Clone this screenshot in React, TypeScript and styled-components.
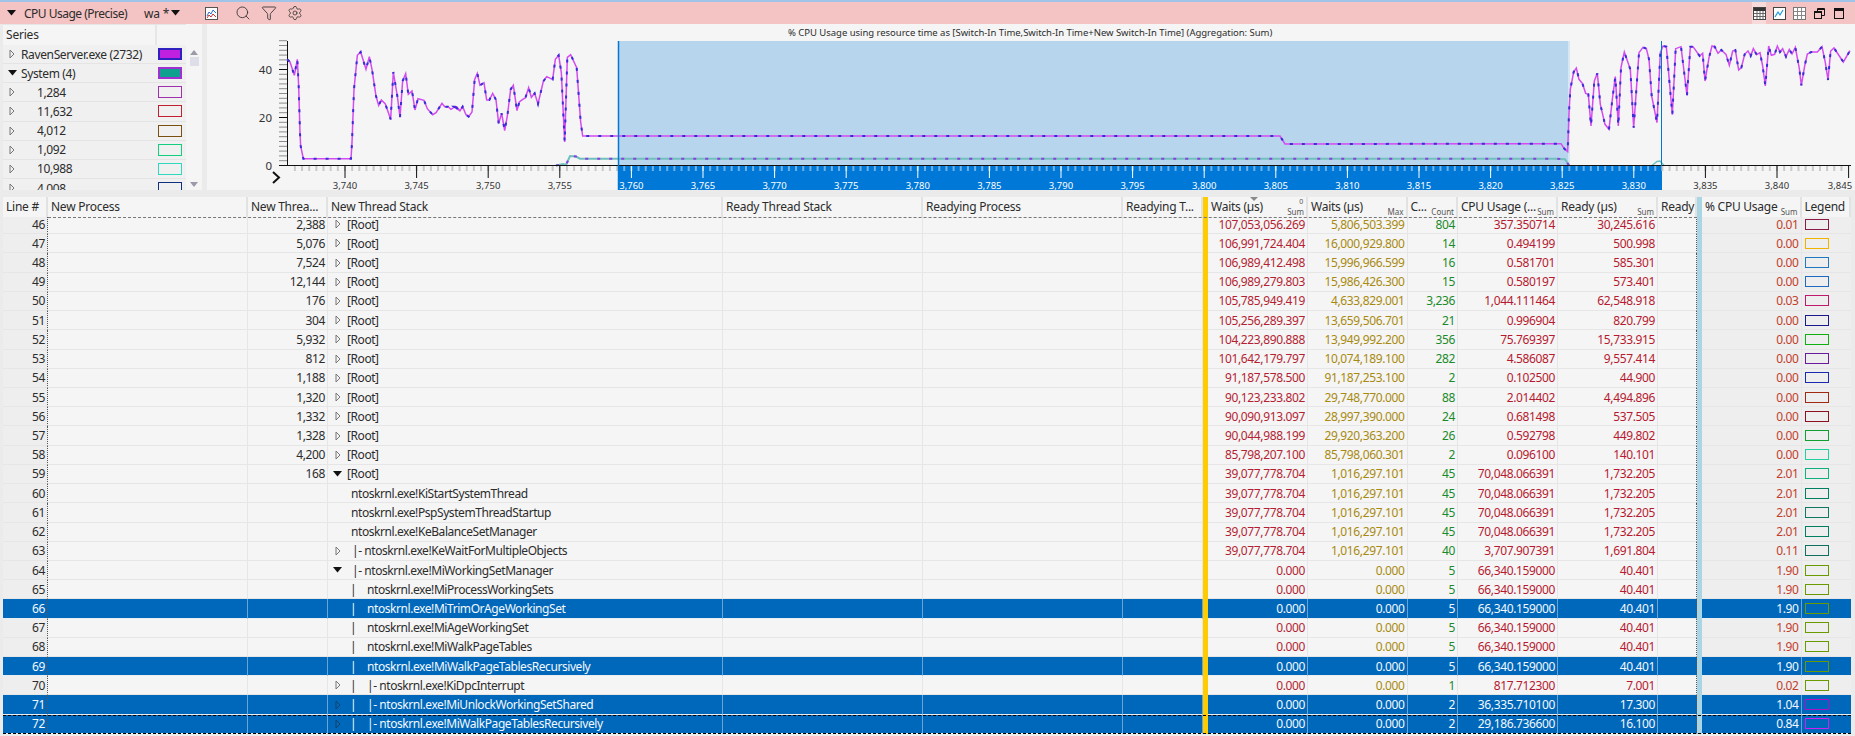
import { Search, Funnel, Settings } from "lucide-react";
import styled, { createGlobalStyle } from "styled-components";

const GlobalStyle = createGlobalStyle`
  html, body {
    margin: 0;
    padding: 0;
    background: #ebebeb;
    overflow: hidden;
  }
  body {
    font-family: "Noto Sans", "Open Sans", sans-serif;
    font-size: 12px;
    color: #2c2c2c;
  }
`;

const Page = styled.div`
  width: 1855px;
  height: 736px;
  overflow: hidden;
  border-top: 2px solid #9fc4e8;
  box-sizing: border-box;
`;

const Toolbar = styled.div`
  display: flex;
  align-items: center;
  height: 22px;
  background: #f4c3c3;
  padding-left: 7px;
`;

const TitleText = styled.span`
  margin-left: 8px;
  width: 120px;
  letter-spacing: -0.5px;
`;

const ViewName = styled.span`
  width: 27px;
  letter-spacing: -0.2px;
`;

const ToolIcon = styled.span<{ $gap?: number }>`
  display: flex;
  align-items: center;
  margin-left: ${(p) => p.$gap ?? 0}px;
  color: #333;
`;

const WindowIcons = styled.div`
  display: flex;
  align-items: center;
  gap: 6px;
  margin-left: auto;
  margin-right: -11px;
  height: 100%;
`;

const WindowIcon = styled.span<{ $active?: boolean }>`
  display: flex;
  align-items: center;
  justify-content: center;
  width: 14px;
  height: 100%;
  background: ${(p) => (p.$active ? "#f7dada" : "transparent")};
`;

const GraphArea = styled.div`
  display: flex;
  height: 166px;
`;

const SeriesPanel = styled.div`
  width: 183px;
  margin-left: 3px;
  background: #f0f0f0;
  overflow: hidden;
`;

const SeriesHeader = styled.div`
  display: grid;
  grid-template-columns: 152px 29px;
  gap: 2px;
  height: 21px;
  padding-top: 1px;
  box-sizing: border-box;
  background: #e6e6e6;
`;

const SeriesHeaderCell = styled.div`
  background: #f5f5f5;
  padding-left: 3px;
  line-height: 19px;
  letter-spacing: -0.2px;
`;

const SeriesRow = styled.div`
  display: flex;
  align-items: center;
  height: 19.15px;
  border-bottom: 1px solid #e4e4e4;
  box-sizing: border-box;
  position: relative;
  letter-spacing: -0.37px;
`;

const SeriesName = styled.span<{ $indent: number }>`
  margin-left: ${(p) => p.$indent}px;
  width: 137px;
  white-space: nowrap;
  flex-shrink: 0;
`;

const SeriesExpander = styled.span`
  display: flex;
  justify-content: center;
  width: 12px;
  margin-left: 3px;
`;

const SeriesSwatch = styled.span<{ $border: string; $fill?: string; $thick?: boolean }>`
  position: absolute;
  left: 155px;
  width: 24px;
  height: 12px;
  box-sizing: border-box;
  border: ${(p) => (p.$thick ? 2 : 1)}px solid ${(p) => p.$border};
  background: ${(p) => p.$fill ?? "transparent"};
`;

const Scroller = styled.div`
  width: 16px;
  background: #f5f5f5;
  display: flex;
  flex-direction: column;
  align-items: center;
  padding: 26px 0 3px;
  box-sizing: border-box;
`;

const ScrollThumb = styled.div`
  width: 9px;
  height: 9px;
  margin-top: 2px;
  background: #dedee8;
`;

const ScrollArrow = styled.div<{ $down?: boolean }>`
  width: 0;
  height: 0;
  border-left: 4.5px solid transparent;
  border-right: 4.5px solid transparent;
  ${(p) => (p.$down ? "border-top: 5px solid #9a9aa8; margin-top: auto;" : "border-bottom: 5px solid #9a9aa8;")}
`;

const ChartPanel = styled.div`
  margin-left: 5px;
  flex: 1;
  background: #f5f5f5;
  display: flex;
  flex-direction: column;
`;

const ChartTitle = styled.div`
  height: 17px;
  line-height: 17px;
  font-size: 9.5px;
  padding-left: 581px;
  white-space: nowrap;
  letter-spacing: -0.03px;
`;

const ChartSvg = styled.svg`
  display: block;
  width: 1648px;
  height: 149px;
  overflow: visible;
`;

const Table = styled.div`
  margin-top: 7px;
  padding-left: 3px;
`;

const gridColumns = "45px 200px 80px 395px 200px 200px 80px 5px 100px 99.5px 50.5px 100px 100px 39px 5px 99.5px 49.5px";

const HeaderRow = styled.div`
  display: grid;
  grid-template-columns: ${gridColumns};
  width: 1848px;
  height: 20px;
  position: relative;
  z-index: 1;
`;

const HeaderCell = styled.div`
  position: relative;
  background: #f5f5f5;
  border-right: 2px solid #e2e2e2;
  box-sizing: border-box;
  padding-left: 3px;
  line-height: 19px;
  white-space: nowrap;
  overflow: hidden;
  letter-spacing: -0.25px;
`;

const SubLabel = styled.span`
  position: absolute;
  right: 2px;
  bottom: 0;
  font-size: 8px;
  line-height: 11px;
  color: #555;
  letter-spacing: 0;
`;

const SortMark = styled.span`
  position: absolute;
  left: 42px;
  top: 0;
  width: 0;
  height: 0;
  border-left: 4px solid transparent;
  border-right: 4px solid transparent;
  border-top: 4px solid #8a8a8a;
`;

const SortIndex = styled.span`
  position: absolute;
  right: 3px;
  top: 0;
  font-size: 7px;
  line-height: 9px;
  color: #555;
`;

const Bar = styled.div<{ $color: string }>`
  background: ${(p) => p.$color};
`;

const Body = styled.div`
  position: relative;
  width: 1848px;
  height: 519px;
  overflow: hidden;
  &::before {
    content: "";
    position: absolute;
    z-index: 2;
    top: 0;
    left: 45px;
    width: 1649px;
    border-top: 1px dashed #777;
  }
`;

const Row = styled.div<{ $selected?: boolean; $focused?: boolean }>`
  position: relative;
  display: grid;
  grid-template-columns: ${gridColumns};
  height: 19.23px;
  background: ${(p) => (p.$selected ? "#0068bb" : "#f5f5f5")};
  &:first-child {
    margin-top: -2px;
  }
  ${(p) =>
    p.$focused &&
    `&::after {
      content: "";
      position: absolute;
      inset: 0;
      border-top: 1px dashed #000;
      border-bottom: 1px dashed #000;
      pointer-events: none;
    }`}
`;

const Cell = styled.div<{
  $selected?: boolean;
  $color?: string;
  $shade?: boolean;
  $dotted?: boolean;
}>`
  box-sizing: border-box;
  display: flex;
  align-items: center;
  justify-content: flex-end;
  padding-right: 2px;
  white-space: nowrap;
  letter-spacing: -0.37px;
  color: ${(p) => (p.$selected ? "#f4f8fc" : p.$color ?? "#2c2c2c")};
  background: ${(p) => (p.$selected ? "#0068bb" : p.$shade ? "#eeeeee" : "#f5f5f5")};
  border-bottom: 1px solid ${(p) => (p.$selected ? "#e9eef2" : "#e6e6e6")};
  border-right: 1px ${(p) => (p.$dotted ? "dotted #555" : "solid")}
    ${(p) => (p.$dotted ? "" : p.$selected ? "#6aa4d4" : "#e6e6e6")};
`;

const StackCell = styled(Cell)`
  justify-content: flex-start;
  padding-left: 5px;
`;

const Expander = styled.span`
  display: flex;
  align-items: center;
  justify-content: center;
  width: 9px;
  flex-shrink: 0;
`;

const StackLabel = styled.span<{ $indent: number }>`
  margin-left: ${(p) => p.$indent}px;
  letter-spacing: -0.43px;
`;

const TreeBar = styled.span<{ $indent: number }>`
  margin-left: ${(p) => p.$indent}px;
  width: 17px;
  flex-shrink: 0;
`;

const LegendSwatch = styled.span<{ $color: string }>`
  width: 24px;
  height: 11px;
  box-sizing: border-box;
  border: 1.5px solid ${(p) => p.$color};
`;

const LegendCell = styled(Cell)`
  justify-content: flex-start;
  padding-left: 3px;
  border-right: none;
`;

const ClosedTriangle = ({ color = "#777" }: { color?: string }) => (
  <svg width="6" height="10" viewBox="0 0 6 10">
    <path d="M1 1 L5 5 L1 9 Z" fill="none" stroke={color} strokeWidth="1" />
  </svg>
);

const OpenTriangle = () => (
  <svg width="9" height="6" viewBox="0 0 9 6">
    <path d="M0 0 H9 L4.5 5.5 Z" fill="#111" />
  </svg>
);

const ChartGlyph = () => (
  <svg width="13" height="13" viewBox="0 0 13 13">
    <rect x="0.5" y="0.5" width="12" height="12" fill="#fff" stroke="#555" />
    <path d="M2 9 L4 5 L6 7 L8 3 L11 6" fill="none" stroke="#2b6fd0" />
    <path d="M2 11 L4 8 L6 10 L8 7 L11 10" fill="none" stroke="#d03030" />
  </svg>
);

const TableGlyph = () => (
  <svg width="13" height="13" viewBox="0 0 13 13">
    <rect x="0.5" y="0.5" width="12" height="12" fill="#fff" stroke="#444" />
    <rect x="1" y="1" width="11" height="3" fill="#333" />
    <path d="M1 6.5 H12 M1 9.5 H12 M4 4 V12 M7 4 V12 M10 4 V12" stroke="#666" />
  </svg>
);

const LineGlyph = () => (
  <svg width="13" height="13" viewBox="0 0 13 13">
    <rect x="0.5" y="0.5" width="12" height="12" fill="#fff" stroke="#444" />
    <path d="M2 10 L5 5 L7 8 L10 3" fill="none" stroke="#1a9ae0" strokeWidth="1.2" />
  </svg>
);

const GridGlyph = () => (
  <svg width="13" height="13" viewBox="0 0 13 13">
    <rect x="0.5" y="0.5" width="12" height="12" fill="#fff" stroke="#777" />
    <path d="M0.5 4.5 H12.5 M0.5 8.5 H12.5 M4.5 0.5 V12.5 M8.5 0.5 V12.5" stroke="#888" />
  </svg>
);

const RestoreGlyph = () => (
  <svg width="11" height="11" viewBox="0 0 11 11">
    <path d="M3.5 3 V0.5 H10.5 V7.5 H8" fill="none" stroke="#111" />
    <rect x="0.5" y="3.5" width="7" height="7" fill="none" stroke="#111" />
    <path d="M1 4.5 H7 M4 1.5 H10" stroke="#111" />
  </svg>
);

const MaximizeGlyph = () => (
  <svg width="10" height="11" viewBox="0 0 10 11">
    <rect x="0.5" y="0.5" width="9" height="10" fill="none" stroke="#111" />
    <path d="M0.5 2 H9.5" stroke="#111" strokeWidth="2" />
  </svg>
);

const CloseGlyph = () => (
  <svg width="10" height="10" viewBox="0 0 10 10">
    <path d="M1 1 L9 9 M9 1 L1 9" stroke="#111" />
  </svg>
);

type Pair = [number, number];

// traced from crops that start at y 36, scale 3
const trace = (left: number, points: Pair[]): Pair[] =>
  points.map(([x, y]) => [left + x / 3, 36 + y / 3]);

const cpuLine: Pair[] = [
  ...trace(280, [
    [22, 70], [30, 78], [43, 118], [52, 70], [56, 150], [60, 290], [62, 330], [70, 368], [213, 368], [216, 320],
    [222, 160], [232, 58], [242, 48], [258, 100], [268, 62], [276, 100], [288, 180], [296, 208], [304, 192],
    [316, 204], [332, 250], [340, 108], [352, 180], [360, 244], [368, 135], [377, 113], [385, 175], [396, 165],
    [405, 222], [414, 188], [432, 193], [442, 218], [458, 236], [468, 230], [486, 202], [494, 212], [504, 212],
    [513, 220], [525, 212], [540, 225],
  ]),
  ...trace(450, [
    [12, 212], [20, 212], [30, 224], [38, 212], [48, 236], [56, 242], [66, 228], [74, 130], [82, 112], [90, 148],
    [102, 140], [110, 192], [118, 192], [128, 172], [138, 192], [146, 262], [155, 232], [164, 284], [172, 240],
    [182, 160], [190, 148], [201, 224], [208, 198], [218, 190], [226, 186], [236, 155], [244, 184], [254, 172],
    [264, 204], [280, 136], [290, 122], [308, 130], [316, 70], [326, 58], [334, 110], [344, 318], [352, 64],
    [362, 56], [380, 95], [392, 258], [398, 300],
  ]),
  [1083, 136], [1280, 136], [1285, 144],
  ...trace(1555, [
    [0, 323], [18, 323], [28, 338], [38, 347], [42, 230], [46, 160], [56, 108], [64, 96], [72, 130], [82, 142],
    [92, 172], [100, 175], [108, 270], [118, 135], [127, 112], [136, 205], [150, 265], [162, 280], [172, 190],
    [181, 122], [190, 270], [198, 95], [208, 48], [226, 100], [236, 275], [252, 50], [264, 34], [274, 38],
    [282, 70], [290, 180], [306, 260], [316, 50], [324, 30], [334, 32], [352, 236], [362, 38], [378, 32],
    [396, 178], [406, 32], [414, 32], [434, 60],
  ]),
  ...trace(1700, [
    [8, 52], [15, 135], [27, 65], [36, 30], [44, 32], [54, 52], [64, 42], [78, 55], [88, 88], [98, 45], [106, 42],
    [116, 102], [124, 95], [134, 55], [144, 45], [152, 60], [160, 38], [170, 56], [180, 50], [188, 90], [196, 150],
    [206, 30], [214, 58], [224, 55], [232, 30], [240, 48], [248, 38], [258, 62], [268, 40], [276, 54], [286, 34],
    [298, 98], [304, 148], [314, 90], [322, 54], [334, 48], [352, 48], [366, 32], [376, 80], [384, 132], [392, 45],
    [402, 36], [430, 78], [450, 44],
  ]),
];

const systemLine: Pair[] = [
  [556, 165.5], [563, 164], [566, 165], [570, 156], [576, 156.5], [580, 158.7], [1555, 158.7], [1565, 159.3],
  [1569, 165.5],
];

const systemBump: Pair[] = [[1652, 165.5], [1657, 161.5], [1660, 161], [1664, 165.5]];

const toPoints = (points: Pair[]) => points.map((p) => p.join(",")).join(" ");

const tickX = (t: number) => 345 + (t - 3740) * 14.32;

const yMinor = Array.from({ length: 27 }, (_, i) => i * 2);
const xMinor = Array.from({ length: 218 }, (_, i) => 3736 + i * 0.5).filter((t) => tickX(t) > 288 && tickX(t) < 1852);
const xMajor = Array.from({ length: 22 }, (_, i) => 3740 + i * 5);

const Chart = () => (
  <ChartSvg viewBox="207 41 1648 149" fontFamily="Noto Sans, sans-serif">
    <rect x="618" y="41" width="950" height="124" fill="#b8d5ee" />
    <rect x="1568" y="41" width="2" height="124" fill="#d6e6f3" />
    <rect x="618" y="166" width="1044" height="24" fill="#0078d7" />
    {yMinor.map((v) => {
      const y = 165.5 - v * 2.4;
      return <line key={v} x1="279" x2="287" y1={y} y2={y} stroke={v % 20 === 0 ? "#111" : "#8c8c8c"} />;
    })}
    <line x1="287.5" x2="287.5" y1="41" y2="166" stroke="#111" />
    {xMinor.map((t) => {
      const x = tickX(t);
      return (
        <line
          key={t}
          x1={x}
          x2={x}
          y1="166"
          y2="171"
          strokeWidth="2"
          stroke={x > 618 && x < 1662 ? "#6fb2e8" : "#c9c9c9"}
        />
      );
    })}
    {xMajor.map((t) => {
      const x = tickX(t);
      const inSelection = x > 618 && x < 1662;
      return (
        <g key={t}>
          <line x1={x} x2={x} y1="166" y2="178" stroke={inSelection ? "#fff" : "#111"} />
          <text
            x={Math.min(x, 1840)}
            y="188.5"
            fontSize="9.5"
            textAnchor="middle"
            fill={inSelection ? "#fff" : "#333"}
          >
            {(t / 1000).toFixed(3).replace(".", ",")}
          </text>
        </g>
      );
    })}
    <text x="272" y="73.5" fontSize="11.5" textAnchor="end" fill="#333">40</text>
    <text x="272" y="121.5" fontSize="11.5" textAnchor="end" fill="#333">20</text>
    <text x="272" y="170" fontSize="11.5" textAnchor="end" fill="#333">0</text>
    <path d="M273 172 L279 177.5 L273 183" fill="none" stroke="#111" strokeWidth="2" />
    <polyline points={toPoints(systemLine)} fill="none" stroke="#71c0bd" strokeWidth="2" />
    <polyline points={toPoints(systemBump)} fill="none" stroke="#71c0bd" strokeWidth="1.5" />
    <polyline points={toPoints(systemLine)} fill="none" stroke="#8a40e0" strokeWidth="2" strokeDasharray="3 9" />
    <polyline points={toPoints(cpuLine)} fill="none" stroke="#d24cf0" strokeWidth="1.5" />
    <polyline points={toPoints(cpuLine)} fill="none" stroke="#3a2cd8" strokeWidth="2" strokeDasharray="3 9" />
    <line x1="279" x2="1851" y1="165.5" y2="165.5" stroke="#111" />
    <line x1="618.5" x2="618.5" y1="41" y2="190" stroke="#0078d7" strokeWidth="1.5" />
    <line x1="1661.5" x2="1661.5" y1="41" y2="166" stroke="#0078c8" />
  </ChartSvg>
);

const seriesItems = [
  { name: "RavenServer.exe (2732)", indent: 3, border: "#3020c0", fill: "#c020e0", thick: true },
  { name: "System (4)", indent: 3, border: "#a030d0", fill: "#10a090", thick: true, open: true },
  { name: "1,284", indent: 19, border: "#a030b0" },
  { name: "11,632", indent: 19, border: "#c02030" },
  { name: "4,012", indent: 19, border: "#7a5010" },
  { name: "1,092", indent: 19, border: "#10d080" },
  { name: "10,988", indent: 19, border: "#30d8c0" },
  { name: "4,008", indent: 19, border: "#103080" },
];

const headers = [
  { label: "Line #" },
  { label: "New Process" },
  { label: "New Threa..." },
  { label: "New Thread Stack" },
  { label: "Ready Thread Stack" },
  { label: "Readying Process" },
  { label: "Readying T..." },
  { bar: "#ffcc00" },
  { label: "Waits (µs)", sub: "Sum", sorted: true },
  { label: "Waits (µs)", sub: "Max" },
  { label: "C...", sub: "Count" },
  { label: "CPU Usage (...", sub: "Sum" },
  { label: "Ready (µs)", sub: "Sum" },
  { label: "Ready" },
  { bar: "#a9d5e5" },
  { label: "% CPU Usage", sub: "Sum" },
  { label: "Legend" },
];

type Stack = { text: string; bars?: number; indent: number; toggle?: "open" | "closed"; dark?: boolean };

const root: Stack = { text: "[Root]", indent: 5, toggle: "closed" };

const sys = "ntoskrnl.exe!";
const idle = ["39,077,778.704", "1,016,297.101", "45", "70,048.066391", "1,732.205", "2.01"];
const working = ["0.000", "0.000", "5", "66,340.159000", "40.401", "1.90"];

const rows: {
  line: number;
  thread?: string;
  stack: Stack;
  values: string[];
  legend: string;
  selected?: boolean;
  focused?: boolean;
}[] = [
  { line: 46, thread: "2,388", stack: root, values: ["107,053,056.269", "5,806,503.399", "804", "357.350714", "30,245.616", "0.01"], legend: "#8b1a4a" },
  { line: 47, thread: "5,076", stack: root, values: ["106,991,724.404", "16,000,929.800", "14", "0.494199", "500.998", "0.00"], legend: "#f0b400" },
  { line: 48, thread: "7,524", stack: root, values: ["106,989,412.498", "15,996,966.599", "16", "0.581701", "585.301", "0.00"], legend: "#1f78c0" },
  { line: 49, thread: "12,144", stack: root, values: ["106,989,279.803", "15,986,426.300", "15", "0.580197", "573.401", "0.00"], legend: "#1f6ac0" },
  { line: 50, thread: "176", stack: root, values: ["105,785,949.419", "4,633,829.001", "3,236", "1,044.111464", "62,548.918", "0.03"], legend: "#c0186a" },
  { line: 51, thread: "304", stack: root, values: ["105,256,289.397", "13,659,506.701", "21", "0.996904", "820.799", "0.00"], legend: "#1a1a8c" },
  { line: 52, thread: "5,932", stack: root, values: ["104,223,890.888", "13,949,992.200", "356", "75.769397", "15,733.915", "0.00"], legend: "#10b010" },
  { line: 53, thread: "812", stack: root, values: ["101,642,179.797", "10,074,189.100", "282", "4.586087", "9,557.414", "0.00"], legend: "#6a1a9c" },
  { line: 54, thread: "1,188", stack: root, values: ["91,187,578.500", "91,187,253.100", "2", "0.102500", "44.900", "0.00"], legend: "#1a2ab0" },
  { line: 55, thread: "1,320", stack: root, values: ["90,123,233.802", "29,748,770.000", "88", "2.014402", "4,494.896", "0.00"], legend: "#a02a10" },
  { line: 56, thread: "1,332", stack: root, values: ["90,090,913.097", "28,997,390.000", "24", "0.681498", "537.505", "0.00"], legend: "#8c1020" },
  { line: 57, thread: "1,328", stack: root, values: ["90,044,988.199", "29,920,363.200", "26", "0.592798", "449.802", "0.00"], legend: "#10a030" },
  { line: 58, thread: "4,200", stack: root, values: ["85,798,207.100", "85,798,060.301", "2", "0.096100", "140.101", "0.00"], legend: "#20d0a0" },
  { line: 59, thread: "168", stack: { ...root, toggle: "open" }, values: idle, legend: "#10b080" },
  { line: 60, stack: { text: sys + "KiStartSystemThread", indent: 9 }, values: idle, legend: "#008060" },
  { line: 61, stack: { text: sys + "PspSystemThreadStartup", indent: 9 }, values: idle, legend: "#107860" },
  { line: 62, stack: { text: sys + "KeBalanceSetManager", indent: 9 }, values: idle, legend: "#008060" },
  { line: 63, stack: { text: "|- " + sys + "KeWaitForMultipleObjects", indent: 10, toggle: "closed" }, values: ["39,077,778.704", "1,016,297.101", "40", "3,707.907391", "1,691.804", "0.11"], legend: "#107060" },
  { line: 64, stack: { text: "|- " + sys + "MiWorkingSetManager", indent: 10, toggle: "open" }, values: working, legend: "#6a9a00" },
  { line: 65, stack: { text: sys + "MiProcessWorkingSets", bars: 1, indent: 8 }, values: working, legend: "#6a9a00" },
  { line: 66, stack: { text: sys + "MiTrimOrAgeWorkingSet", bars: 1, indent: 8 }, values: working, legend: "#6a9a00", selected: true },
  { line: 67, stack: { text: sys + "MiAgeWorkingSet", bars: 1, indent: 8 }, values: working, legend: "#6a9a00" },
  { line: 68, stack: { text: sys + "MiWalkPageTables", bars: 1, indent: 8 }, values: working, legend: "#6a9a00" },
  { line: 69, stack: { text: sys + "MiWalkPageTablesRecursively", bars: 1, indent: 8 }, values: working, legend: "#6a9a00", selected: true },
  { line: 70, stack: { text: "|- " + sys + "KiDpcInterrupt", bars: 1, indent: 8, toggle: "closed" }, values: ["0.000", "0.000", "1", "817.712300", "7.001", "0.02"], legend: "#6a9a00" },
  { line: 71, stack: { text: "|- " + sys + "MiUnlockWorkingSetShared", bars: 1, indent: 8, toggle: "closed", dark: true }, values: ["0.000", "0.000", "2", "36,335.710100", "17.300", "1.04"], legend: "#b010c8", selected: true },
  { line: 72, stack: { text: "|- " + sys + "MiWalkPageTablesRecursively", bars: 1, indent: 8, toggle: "closed", dark: true }, values: ["0.000", "0.000", "2", "29,186.736600", "16.100", "0.84"], legend: "#d020f0", selected: true, focused: true },
];

const valueColors = ["#b31f33", "#a88a10", "#1a8a2a", "#b51a30", "#b51a30"];

const StackContent = ({ stack }: { stack: Stack }) => (
  <>
    <Expander>
      {stack.toggle === "open" && <OpenTriangle />}
      {stack.toggle === "closed" && <ClosedTriangle color={stack.dark ? "#14406c" : "#777"} />}
    </Expander>
    {stack.bars ? (
      <>
        <TreeBar $indent={stack.indent}>|</TreeBar>
        <StackLabel $indent={0}>{stack.text}</StackLabel>
      </>
    ) : (
      <StackLabel $indent={stack.indent}>{stack.text}</StackLabel>
    )}
  </>
);

export default function App() {
  return (
    <Page>
      <GlobalStyle />
      <Toolbar>
        <OpenTriangle />
        <TitleText>CPU Usage (Precise)</TitleText>
        <ViewName>wa *</ViewName>
        <OpenTriangle />
        <ToolIcon $gap={25}>
          <ChartGlyph />
        </ToolIcon>
        <ToolIcon $gap={17}>
          <Search size={16} strokeWidth={1.3} />
        </ToolIcon>
        <ToolIcon $gap={10}>
          <Funnel size={16} strokeWidth={1.3} />
        </ToolIcon>
        <ToolIcon $gap={10}>
          <Settings size={16} strokeWidth={1.2} />
        </ToolIcon>
        <WindowIcons>
          <WindowIcon $active>
            <TableGlyph />
          </WindowIcon>
          <WindowIcon>
            <LineGlyph />
          </WindowIcon>
          <WindowIcon>
            <GridGlyph />
          </WindowIcon>
          <WindowIcon>
            <RestoreGlyph />
          </WindowIcon>
          <WindowIcon>
            <MaximizeGlyph />
          </WindowIcon>
          <WindowIcon>
            <CloseGlyph />
          </WindowIcon>
        </WindowIcons>
      </Toolbar>
      <GraphArea>
        <SeriesPanel>
          <SeriesHeader>
            <SeriesHeaderCell>Series</SeriesHeaderCell>
            <SeriesHeaderCell />
          </SeriesHeader>
          {seriesItems.map((item) => (
            <SeriesRow key={item.name}>
              <SeriesExpander>{item.open ? <OpenTriangle /> : <ClosedTriangle />}</SeriesExpander>
              <SeriesName $indent={item.indent}>{item.name}</SeriesName>
              <SeriesSwatch $border={item.border} $fill={item.fill} $thick={item.thick} />
            </SeriesRow>
          ))}
        </SeriesPanel>
        <Scroller>
          <ScrollArrow />
          <ScrollThumb />
          <ScrollArrow $down />
        </Scroller>
        <ChartPanel>
          <ChartTitle>
            % CPU Usage using resource time as [Switch-In Time,Switch-In Time+New Switch-In Time] (Aggregation: Sum)
          </ChartTitle>
          <Chart />
        </ChartPanel>
      </GraphArea>
      <Table>
        <HeaderRow>
          {headers.map((h, i) =>
            h.bar ? (
              <Bar key={i} $color={h.bar} />
            ) : (
              <HeaderCell key={i}>
                {h.label}
                {h.sorted && <SortMark />}
                {h.sorted && <SortIndex>0</SortIndex>}
                {h.sub && <SubLabel>{h.sub}</SubLabel>}
              </HeaderCell>
            ),
          )}
        </HeaderRow>
        <Body>
          {rows.map((row) => {
            const selected = row.selected;
            return (
              <Row key={row.line} $selected={selected} $focused={row.focused}>
                <Cell $selected={selected} $shade $dotted>
                  {row.line}
                </Cell>
                <Cell $selected={selected} />
                <Cell $selected={selected}>{row.thread}</Cell>
                <StackCell $selected={selected}>
                  <StackContent stack={row.stack} />
                </StackCell>
                <Cell $selected={selected} />
                <Cell $selected={selected} />
                <Cell $selected={selected} />
                <Bar $color="#ffcc00" />
                {row.values.slice(0, 5).map((value, i) => (
                  <Cell key={i} $selected={selected} $color={valueColors[i]}>
                    {value}
                  </Cell>
                ))}
                <Cell $selected={selected} $dotted />
                <Bar $color="#a9d5e5" />
                <Cell $selected={selected} $shade $color="#c2402c">
                  {row.values[5]}
                </Cell>
                <LegendCell $selected={selected} $shade>
                  <LegendSwatch $color={row.legend} />
                </LegendCell>
              </Row>
            );
          })}
        </Body>
      </Table>
    </Page>
  );
}
